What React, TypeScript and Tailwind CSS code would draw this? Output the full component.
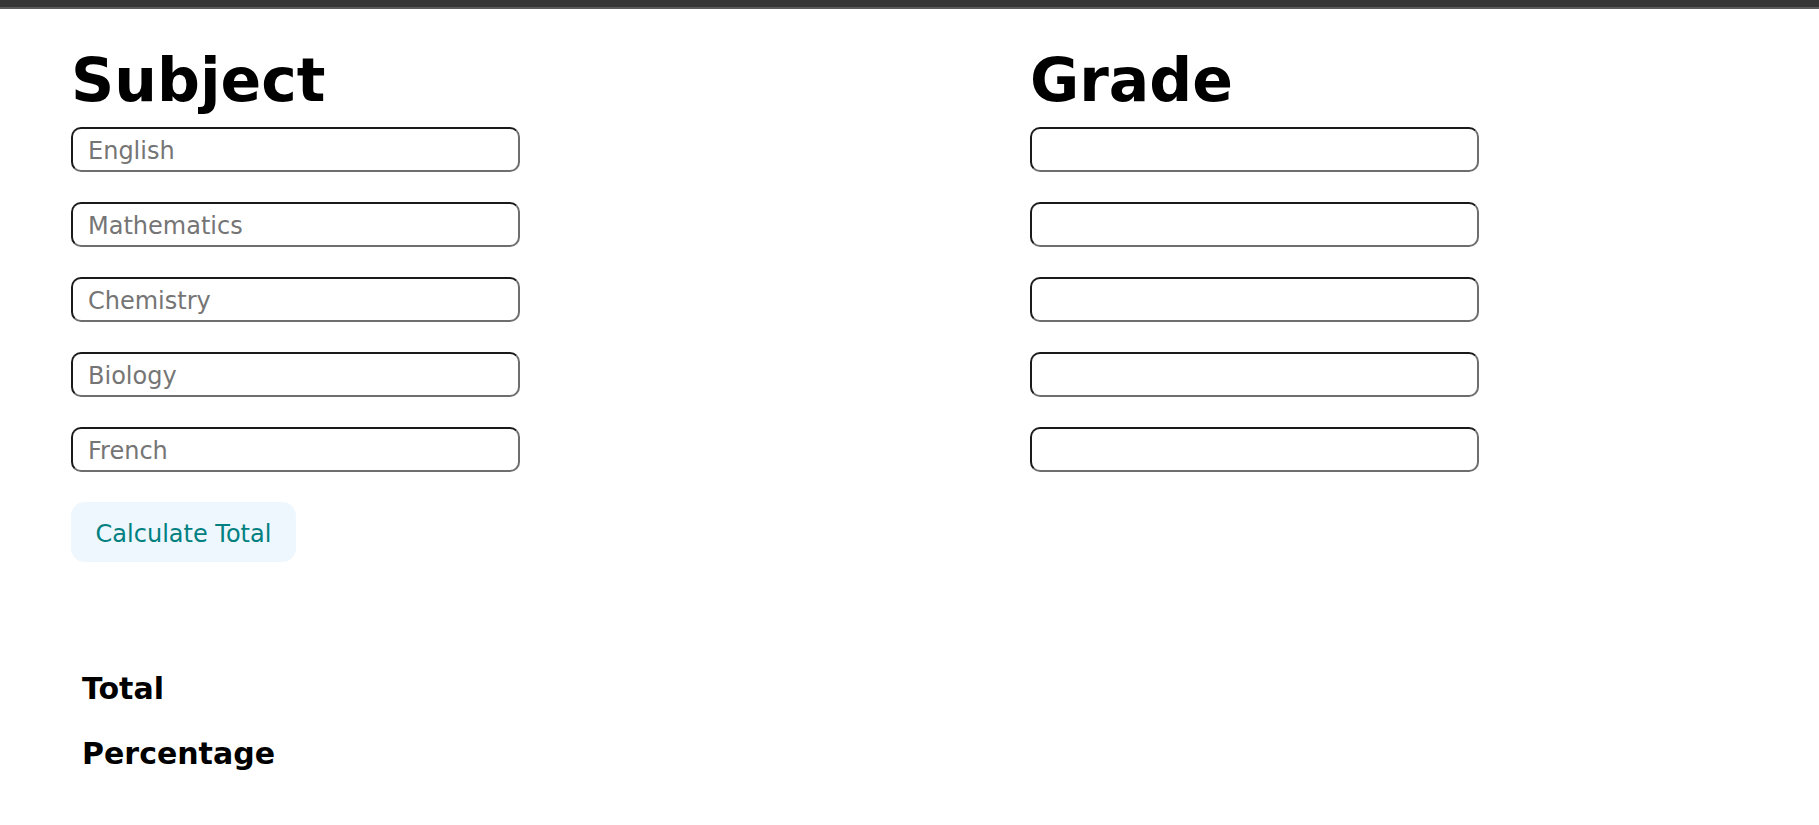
import { useState } from "react";

const subjects = ["English", "Mathematics", "Chemistry", "Biology", "French"];

const inputClass =
  "h-[45px] w-[449px] rounded-[10px] border-2 border-t-[#1a1a1a] border-l-[#1a1a1a] border-b-[#6e6e6e] border-r-[#6e6e6e] bg-white pl-[15px] pt-[2px] text-[24px] text-black placeholder:text-[#757575] outline-none";

const App = () => {
  const [grades, setGrades] = useState<string[]>(["", "", "", "", ""]);
  const [total, setTotal] = useState<number | null>(null);

  const calculate = () => {
    const sum = grades.reduce((acc, g) => acc + (parseFloat(g) || 0), 0);
    setTotal(sum);
  };

  return (
    <div className="min-h-screen bg-white font-['DejaVu_Sans',sans-serif] text-black">
      <div className="h-[7px] bg-[#363636]" />
      <div className="h-[2px] bg-[#5c5c5c]" />

      <div className="grid grid-cols-[959px_1fr] pl-[71px] pt-[42px]">
        {/* Subject column */}
        <div className="flex flex-col">
          <h1 className="text-[60px] font-bold leading-[58px] mb-[18px]">
            Subject
          </h1>
          <div className="flex flex-col gap-[30px]">
            {subjects.map((s) => (
              <input key={s} type="text" placeholder={s} className={inputClass} />
            ))}
          </div>
          <button
            onClick={calculate}
            className="mt-[30px] h-[60px] w-[225px] rounded-[14px] bg-[#eef7fe] pt-[3px] text-[24px] text-[#008080]"
          >
            Calculate Total
          </button>
        </div>

        {/* Grade column */}
        <div className="flex flex-col">
          <h1 className="text-[60px] font-bold leading-[58px] mb-[18px]">
            Grade
          </h1>
          <div className="flex flex-col gap-[30px]">
            {grades.map((g, i) => (
              <input
                key={i}
                type="text"
                value={g}
                onChange={(e) => {
                  const next = [...grades];
                  next[i] = e.target.value;
                  setGrades(next);
                }}
                className={inputClass}
              />
            ))}
          </div>
        </div>
      </div>

      <div className="flex flex-col gap-[35px] pl-[82px] pt-[112px]">
        <h3 className="text-[30px] font-bold leading-[30px]">
          Total {total !== null && total}
        </h3>
        <h3 className="text-[30px] font-bold leading-[30px]">
          Percentage {total !== null && `${(total / 5).toFixed(1)}%`}
        </h3>
      </div>
    </div>
  );
};

export default App;
